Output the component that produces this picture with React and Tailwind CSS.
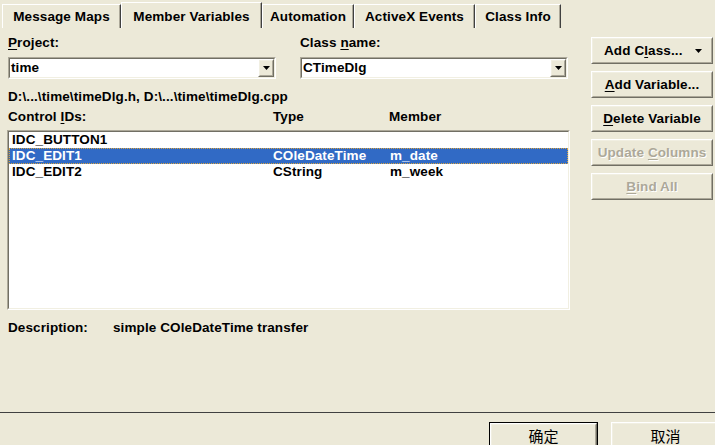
import React from "react";

const Tri = () => (
  <svg width="7" height="4" viewBox="0 0 7 4" className="block">
    <path d="M0 0H7L3.5 4Z" fill="#000" />
  </svg>
);

const Sunken = ({ className = "", innerClass = "", children }) => (
  <div className={`border border-t-[#ACA899] border-l-[#ACA899] border-b-white border-r-white ${className}`}>
    <div className={`h-full border border-t-[#716F64] border-l-[#716F64] border-b-[#F1EFE2] border-r-[#F1EFE2] bg-white ${innerClass}`}>
      {children}
    </div>
  </div>
);

const Raised = ({ className = "", innerClass = "", children }) => (
  <div className={`border border-t-white border-l-white border-b-[#716F64] border-r-[#716F64] ${className}`}>
    <div className={`h-full border border-t-[#F1EFE2] border-l-[#F1EFE2] border-b-[#ACA899] border-r-[#ACA899] ${innerClass}`}>
      {children}
    </div>
  </div>
);

const Combo = ({ value }) => (
  <Sunken className="h-[22px] w-[268px]" innerClass="flex items-center">
    <span className="flex-1 pl-[1px] leading-[16px]">{value}</span>
    <Raised className="h-full w-[16px] bg-[#ECE9D8]" innerClass="flex items-center justify-center">
      <Tri />
    </Raised>
  </Sunken>
);

const U = ({ children }) => <span className="underline underline-offset-[2px]">{children}</span>;

const Tab = ({ w, active, children }) => (
  <div
    className={`${w} ${active ? "h-[26px] pt-[6px]" : "h-[24px] pt-[4px]"} shrink-0 border-t border-l border-t-white border-l-white border-r border-r-[#404040] shadow-[inset_-1px_0_0_#ACA899] text-center leading-[16px] whitespace-nowrap`}
  >
    {children}
  </div>
);

const SideBtn = ({ disabled, children, className = "" }) => (
  <Raised className="h-[27px] w-[122px]" innerClass={`flex items-center justify-center leading-[16px] whitespace-nowrap ${className}`}>
    {children}
  </Raised>
);

const rows = [
  { id: "IDC_BUTTON1", type: "", member: "" },
  { id: "IDC_EDIT1", type: "COleDateTime", member: "m_date", sel: true },
  { id: "IDC_EDIT2", type: "CString", member: "m_week" },
];

const dis = "text-[#ACA899] [text-shadow:1px_1px_0_#ffffff]";

export default function App() {
  return (
    <div className="w-[715px] h-[445px] overflow-hidden bg-[#ECE9D8] text-black text-[13.5px] tracking-[0.1px] font-bold font-['Liberation_Sans',Arial,sans-serif] flex flex-col">
      {/* Tabs */}
      <div className="h-[28px] flex items-end pl-[2px] shrink-0">
        <Tab w="w-[119px]">Message Maps</Tab>
        <Tab w="w-[141px]" active>Member Variables</Tab>
        <Tab w="w-[92px]">Automation</Tab>
        <Tab w="w-[121px]">ActiveX Events</Tab>
        <Tab w="w-[86px]">Class Info</Tab>
      </div>

      {/* Content */}
      <div className="h-[384px] shrink-0 flex">
        <div className="ml-[7px] w-[563px] flex flex-col">
          <div className="pt-[7px] pl-[1px] grid grid-cols-[268px_268px] gap-x-[24px]">
            <div className="leading-[16px]"><U>P</U>roject:</div>
            <div className="leading-[16px]">Class <U>n</U>ame:</div>
            <div className="mt-[6px]"><Combo value="time" /></div>
            <div className="mt-[6px]"><Combo value="CTimeDlg" /></div>
          </div>
          <div className="mt-[10px] pl-[1px] leading-[16px] whitespace-nowrap">D:\...\time\timeDlg.h, D:\...\time\timeDlg.cpp</div>
          <div className="mt-[4px] pl-[1px] flex leading-[16px]">
            <span className="w-[265px]">Control <U>I</U>Ds:</span>
            <span className="w-[116px]">Type</span>
            <span>Member</span>
          </div>
          <Sunken className="mt-[5px] h-[180px] w-[563px]">
            <div className="flex flex-col">
              {rows.map((r) => (
                <div
                  key={r.id}
                  className={`h-[16px] flex items-center leading-[16px] whitespace-nowrap ${r.sel ? "bg-[#316AC5] text-white border border-dotted border-[#D9A441] pl-[2px]" : "pl-[3px]"}`}
                >
                  <span className="w-[261px] shrink-0">{r.id}</span>
                  <span className="w-[117px] shrink-0">{r.type}</span>
                  <span>{r.member}</span>
                </div>
              ))}
            </div>
          </Sunken>
          <div className="mt-[10px] pl-[1px] flex leading-[16px]">
            <span className="w-[105px]">Description:</span>
            <span>simple COleDateTime transfer</span>
          </div>
        </div>

        <div className="ml-[21px] pt-[9px] flex flex-col gap-[7px]">
          <SideBtn className="!justify-between pl-[11px] pr-[9px]">
            <span>Add C<U>l</U>ass...</span>
            <Tri />
          </SideBtn>
          <SideBtn><span><U>A</U>dd Variable...</span></SideBtn>
          <SideBtn><span><U>D</U>elete Variable</span></SideBtn>
          <SideBtn><span className={dis}>Update <U>C</U>olumns</span></SideBtn>
          <SideBtn><span className={dis}><U>B</U>ind All</span></SideBtn>
        </div>
      </div>

      {/* Bottom */}
      <div className="flex-1 border-t border-t-[#404040] pt-[9px] pl-[489px] flex gap-[13px]">
        <div className="w-[109px] h-[28px] shrink-0 border border-black">
          <Raised className="h-full" innerClass="flex justify-center pt-[2px]">
            <span className="font-normal text-[15px] leading-[18px] font-['Noto_Sans_CJK_SC',sans-serif]">确定</span>
          </Raised>
        </div>
        <Raised className="w-[109px] h-[28px] shrink-0" innerClass="flex justify-center pt-[3px]">
          <span className="font-normal text-[15px] leading-[18px] font-['Noto_Sans_CJK_SC',sans-serif]">取消</span>
        </Raised>
      </div>
    </div>
  );
}
